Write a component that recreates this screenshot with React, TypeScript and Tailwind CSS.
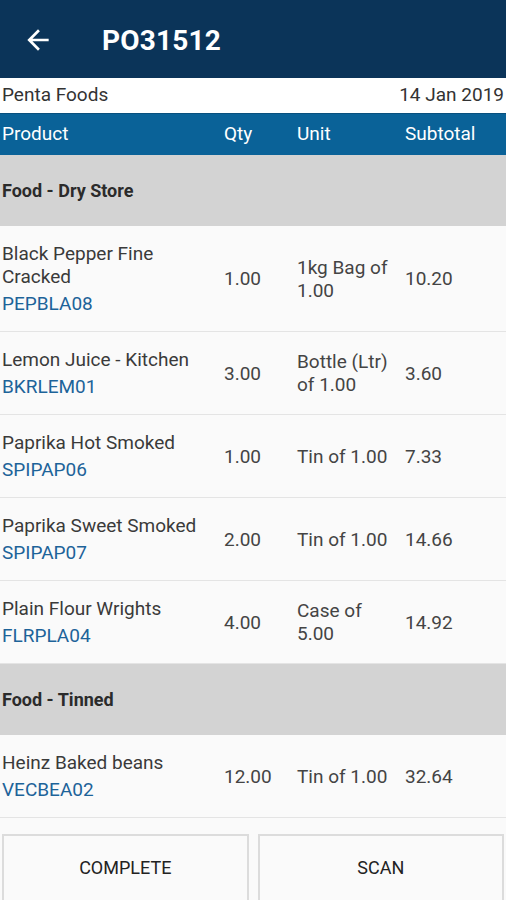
import React from 'react'

type Item = { name: string[]; code: string; qty: string; unit: string[]; subtotal: string }

const dryStore: Item[] = [
  { name: ['Black Pepper Fine', 'Cracked'], code: 'PEPBLA08', qty: '1.00', unit: ['1kg Bag of', '1.00'], subtotal: '10.20' },
  { name: ['Lemon Juice - Kitchen'], code: 'BKRLEM01', qty: '3.00', unit: ['Bottle (Ltr)', 'of 1.00'], subtotal: '3.60' },
  { name: ['Paprika Hot Smoked'], code: 'SPIPAP06', qty: '1.00', unit: ['Tin of 1.00'], subtotal: '7.33' },
  { name: ['Paprika Sweet Smoked'], code: 'SPIPAP07', qty: '2.00', unit: ['Tin of 1.00'], subtotal: '14.66' },
  { name: ['Plain Flour Wrights'], code: 'FLRPLA04', qty: '4.00', unit: ['Case of', '5.00'], subtotal: '14.92' },
]

const tinned: Item[] = [
  { name: ['Heinz Baked beans'], code: 'VECBEA02', qty: '12.00', unit: ['Tin of 1.00'], subtotal: '32.64' },
]

const Section = ({ title }: { title: string }) => (
  <div className="h-[71px] bg-[#d3d3d3] flex items-center pl-[2px] text-[18px] font-bold text-[#2b2b2b]">
    {title}
  </div>
)

const Row = ({ item }: { item: Item }) => (
  <div className="flex items-center pt-[16px] pb-[12px] border-b border-[#e4e4e4] text-[19px] text-[#444]">
    <div className="w-[222px] pl-[2px] shrink-0">
      {item.name.map((n) => (
        <div key={n} className="leading-[23px] text-[#3a3a3a]">{n}</div>
      ))}
      <div className="leading-[31px] text-[#1d6399]">{item.code}</div>
    </div>
    <div className="w-[75px] pl-[2px] pb-[4px] shrink-0 leading-[23px]">{item.qty}</div>
    <div className="w-[108px] pb-[4px] shrink-0">
      {item.unit.map((u) => (
        <div key={u} className="leading-[23px]">{u}</div>
      ))}
    </div>
    <div className="pb-[4px] leading-[23px]">{item.subtotal}</div>
  </div>
)

const App = () => {
  return (
    <main className="w-full min-h-screen bg-[#fafafa] font-['Roboto',sans-serif]">
      <nav className="h-[78px] bg-[#0b3459] flex items-center">
        <svg viewBox="0 0 24 24" className="w-[32px] h-[32px] ml-[22px] mt-[2px]" fill="white">
          <path d="M20 11H7.83l5.59-5.59L12 4l-8 8 8 8 1.41-1.41L7.83 13H20v-2z" />
        </svg>
        <h1 className="ml-[48px] mt-[3px] text-[28px] font-bold text-white tracking-[0.2px]">PO31512</h1>
      </nav>
      <div className="h-[35px] bg-white flex items-center justify-between px-[2px] text-[19px] text-[#333]">
        <span>Penta Foods</span>
        <span>14 Jan 2019</span>
      </div>
      <div className="h-[42px] bg-[#0a6298] flex items-center text-[19px] text-white border-t border-[#08507e]">
        <div className="w-[222px] pl-[2px]">Product</div>
        <div className="w-[75px] pl-[2px]">Qty</div>
        <div className="w-[108px]">Unit</div>
        <div>Subtotal</div>
      </div>
      <Section title="Food - Dry Store" />
      {dryStore.map((it) => (
        <Row key={it.code} item={it} />
      ))}
      <Section title="Food - Tinned" />
      {tinned.map((it) => (
        <Row key={it.code} item={it} />
      ))}
      <div className="flex gap-[9px] px-[2px] pt-[16px]">
        <button className="flex-1 h-[70px] pb-[4px] bg-[#fafafa] border-2 border-[#dcdcdc] text-[18px] font-normal text-[#222]">COMPLETE</button>
        <button className="flex-1 h-[70px] pb-[4px] bg-[#fafafa] border-2 border-[#dcdcdc] text-[18px] font-normal text-[#222]">SCAN</button>
      </div>
    </main>
  )
}

export default App
